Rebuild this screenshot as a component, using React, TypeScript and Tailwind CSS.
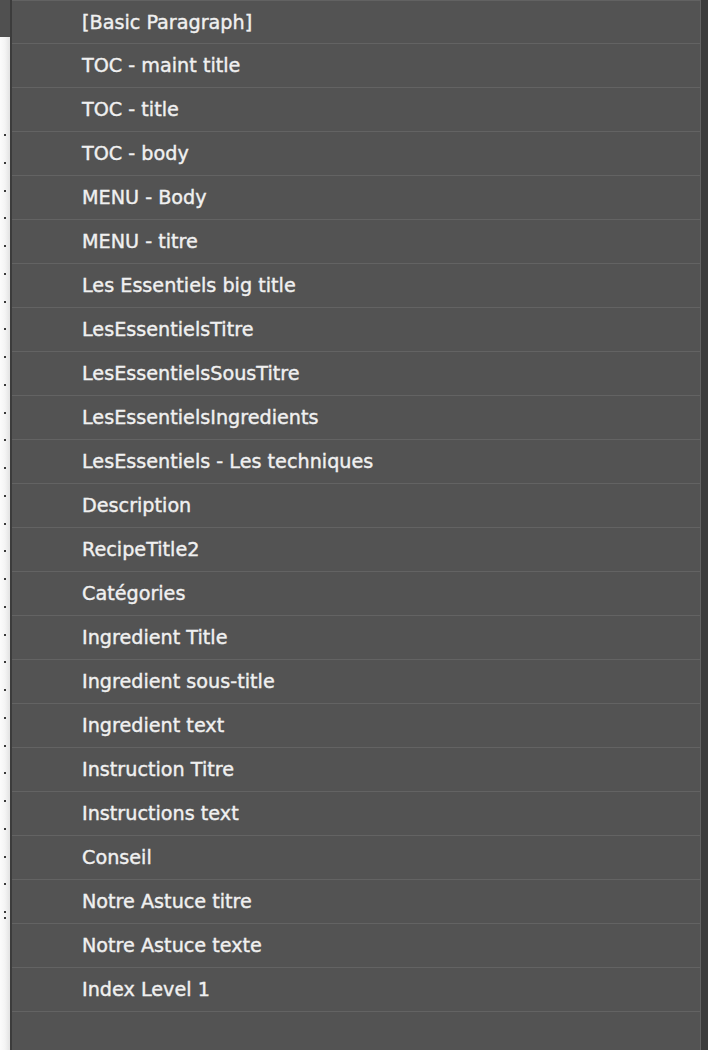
import React from "react"

const styles = [
    "[Basic Paragraph]",
    "TOC - maint title",
    "TOC - title",
    "TOC - body",
    "MENU - Body",
    "MENU - titre",
    "Les Essentiels big title",
    "LesEssentielsTitre",
    "LesEssentielsSousTitre",
    "LesEssentielsIngredients",
    "LesEssentiels - Les techniques",
    "Description",
    "RecipeTitle2",
    "Catégories",
    "Ingredient Title",
    "Ingredient sous-title",
    "Ingredient text",
    "Instruction Titre",
    "Instructions text",
    "Conseil",
    "Notre Astuce titre",
    "Notre Astuce texte",
    "Index Level 1",
]

export default function App() {
    const dots = Array.from({ length: 29 })

    return (
        <div className="flex h-[1050px] w-[708px] overflow-hidden bg-[#535353] font-['DejaVu_Sans',sans-serif]">
            {/* Ruler strip on the left */}
            <div className="flex w-[10px] flex-col">
                <div className="h-[37px] bg-[#505050]" />
                <div className="flex flex-1 flex-col items-center bg-gradient-to-r from-[#fbfbfb] via-[#f4f4f4] to-[#e2e2e2] pt-[97px]">
                    {dots.map((_, i) => (
                        <div key={i} className="flex h-[27.75px] items-start justify-center">
                            <div className="h-[2px] w-[2px] bg-[#3a3a3a]" />
                        </div>
                    ))}
                    <div className="-mt-[22px] h-[2px] w-[2px] bg-[#3a3a3a]" />
                </div>
            </div>
            <div className="w-[2px] bg-[#3c3c3c]" />

            {/* Paragraph styles list */}
            <div className="flex flex-1 flex-col border-t border-r border-[#626262] bg-[#535353]">
                {styles.map((name, i) => (
                    <div
                        key={name}
                        className={
                            "flex shrink-0 items-center border-b border-[#636363] pt-[2px] pl-[70px] text-[19.2px] text-[#f0f0f0] [-webkit-text-stroke:0.4px_#f0f0f0] " +
                            (i === 0 ? "h-[43px]" : "h-[44px]")
                        }
                    >
                        {name}
                    </div>
                ))}
                <div className="flex-1" />
            </div>
            <div className="w-[7px] bg-[#3b3b3b]" />
        </div>
    )
}
